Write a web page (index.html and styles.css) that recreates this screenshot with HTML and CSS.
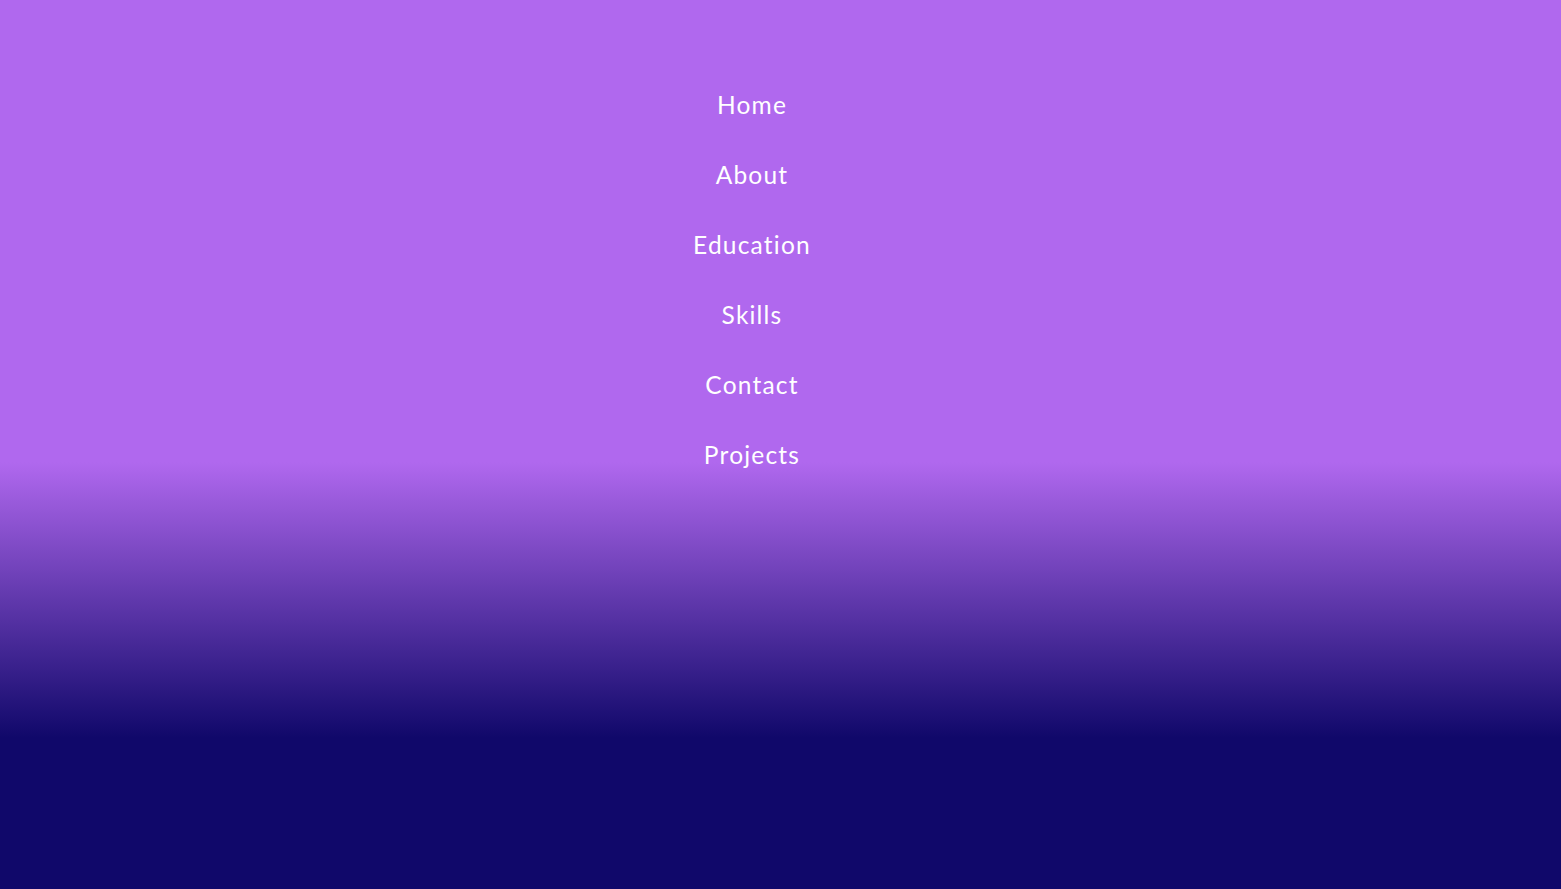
FILE: index.html
```html
<!DOCTYPE html>
<html lang="en">
<head>
<meta charset="utf-8">
<title>Menu</title>
<link rel="stylesheet" href="styles.css">
</head>
<body>
<nav class="menu">
  <ul class="menu-list">
    <li><a href="#home">Home</a></li>
    <li><a href="#about">About</a></li>
    <li><a href="#education">Education</a></li>
    <li><a href="#skills">Skills</a></li>
    <li><a href="#contact">Contact</a></li>
    <li><a href="#projects">Projects</a></li>
  </ul>
</nav>
</body>
</html>
```
FILE: styles.css
```css
html, body {
  margin: 0;
  height: 100%;
}
body {
  background: linear-gradient(to bottom, #b068ee 0%, #b068ee 52%, #10086a 83%, #10086a 100%);
  font-family: "Lato", "Open Sans", sans-serif;
  font-weight: 400;
  min-height: 889px;
}
.menu {
  padding: 70px 57px 0 0;
}
.menu-list {
  list-style: none;
  margin: 0;
  padding: 0;
  display: flex;
  flex-direction: column;
  align-items: center;
}
.menu-list li {
  height: 70px;
  line-height: 70px;
}
.menu-list a {
  color: #ffffff;
  text-decoration: none;
  font-size: 24.5px;
  letter-spacing: 1.2px;
}
```
